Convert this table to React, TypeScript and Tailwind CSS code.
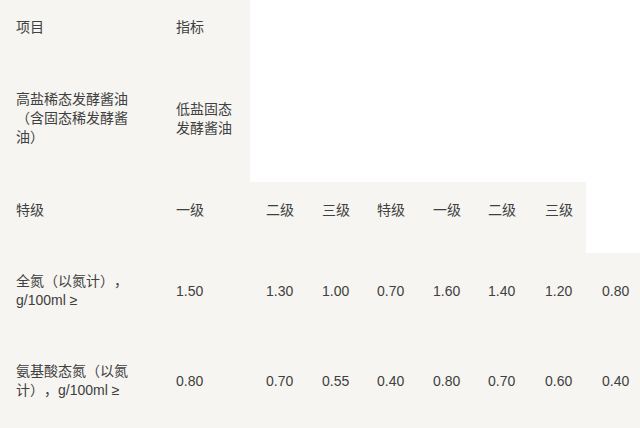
import React from "react";

const BG = "bg-[#f6f5f1]";

function Cell({
  children,
  white,
  cls = "",
}: {
  children?: React.ReactNode;
  white?: boolean;
  cls?: string;
}) {
  return (
    <div
      className={`flex items-center pl-4 ${white ? "bg-white" : BG} ${cls}`}
    >
      <div className="leading-[19px]">{children}</div>
    </div>
  );
}

export default function App() {
  const grades = ["特级", "一级", "二级", "三级", "特级", "一级", "二级", "三级"];
  const n = ["1.50", "1.30", "1.00", "0.70", "1.60", "1.40", "1.20", "0.80"];
  const a = ["0.80", "0.70", "0.55", "0.40", "0.80", "0.70", "0.60", "0.40"];
  return (
    <div
      className="w-[640px] h-[428px] overflow-hidden bg-white text-[14px] text-[#404040] [text-spacing-trim:space-all]"
      style={{ fontFamily: '"Liberation Sans", "Noto Sans CJK SC", sans-serif' }}
    >
      <div className="grid grid-cols-[160px_90px_56px_55px_56px_55px_57px_57px_54px] grid-rows-[55px_127px_71px_76px_99px]">
        {/* Row A */}
        <Cell>项目</Cell>
        <Cell>指标</Cell>
        <div className="col-span-7 bg-white" />
        {/* Row B */}
        <Cell>
          <div>高盐稀态发酵酱油</div>
          <div>（含固态稀发酵酱</div>
          <div>油）</div>
        </Cell>
        <Cell>
          <div>低盐固态</div>
          <div>发酵酱油</div>
        </Cell>
        <div className="col-span-7 bg-white" />
        {/* Row C */}
        {grades.map((g, i) => (
          <Cell key={"g" + i} cls="pb-[15px]">
            {g}
          </Cell>
        ))}
        <div className="bg-white" />
        {/* Row D */}
        <Cell>
          <div>全氮（以氮计），</div>
          <div>g/100ml ≥</div>
        </Cell>
        {n.map((v, i) => (
          <Cell key={"n" + i}>{v}</Cell>
        ))}
        {/* Row E */}
        <Cell cls="pt-[5px]">
          <div>氨基酸态氮（以氮</div>
          <div>计），g/100ml ≥</div>
        </Cell>
        {a.map((v, i) => (
          <Cell key={"a" + i} cls="pt-[5px]">
            {v}
          </Cell>
        ))}
      </div>
    </div>
  );
}
